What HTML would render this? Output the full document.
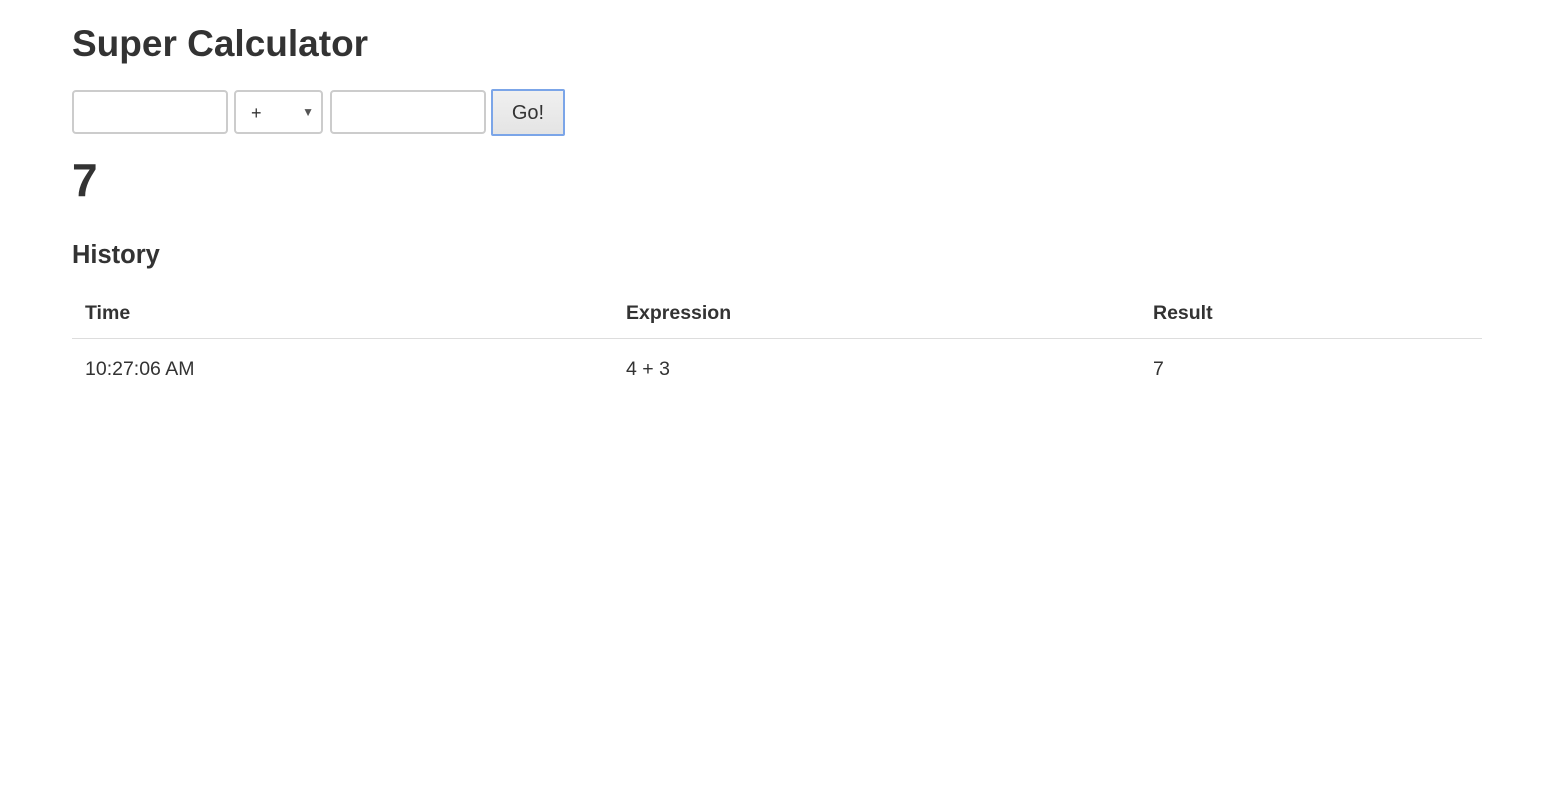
<!DOCTYPE html>
<html><head><style>
body{margin:0;font-family:"Liberation Sans",sans-serif;color:#333;background:#fff}
.c{position:absolute;left:72px;top:0;width:1410px}
h1{position:absolute;top:24px;left:0;margin:0;font-size:37px;font-weight:bold;line-height:40px}
.box{position:absolute;top:90px;height:40px;border:2px solid #ccc;border-radius:4px;background:#fff;box-sizing:content-box}
.r{position:absolute;top:155px;left:0;font-size:46px;font-weight:bold;line-height:50px}
h3{position:absolute;top:240px;left:0;margin:0;font-size:25.5px;line-height:30px}
table{position:absolute;top:288px;left:0;width:1410px;border-collapse:collapse;font-size:19.5px}
th,td{text-align:left;padding:0 13px}
th{height:50px;border-bottom:1px solid #ddd}
td{height:54px;padding-top:3px}
</style></head><body><div class="c">
<h1>Super Calculator</h1>
<div class="box" style="left:0;width:152px;height:40px"></div>
<div class="box" style="left:162px;width:85px;height:40px"><span style="position:absolute;left:15px;top:11px;font-size:18px">+</span><span style="position:absolute;right:7px;top:13px;font-size:12px;color:#555">▼</span></div>
<div class="box" style="left:258px;width:152px;height:40px"></div>
<div style="position:absolute;left:419px;top:89px;width:70px;height:43px;border:2px solid #7ba5e8;border-radius:2px;background:linear-gradient(#f0f0f0,#e4e4e4);font-size:20px;text-align:center;line-height:44px">Go!</div>
<div class="r">7</div>
<h3>History</h3>
<table><tr><th style="width:515px">Time</th><th style="width:501px">Expression</th><th>Result</th></tr>
<tr><td>10:27:06 AM</td><td>4 + 3</td><td>7</td></tr></table>
</div></body></html>
